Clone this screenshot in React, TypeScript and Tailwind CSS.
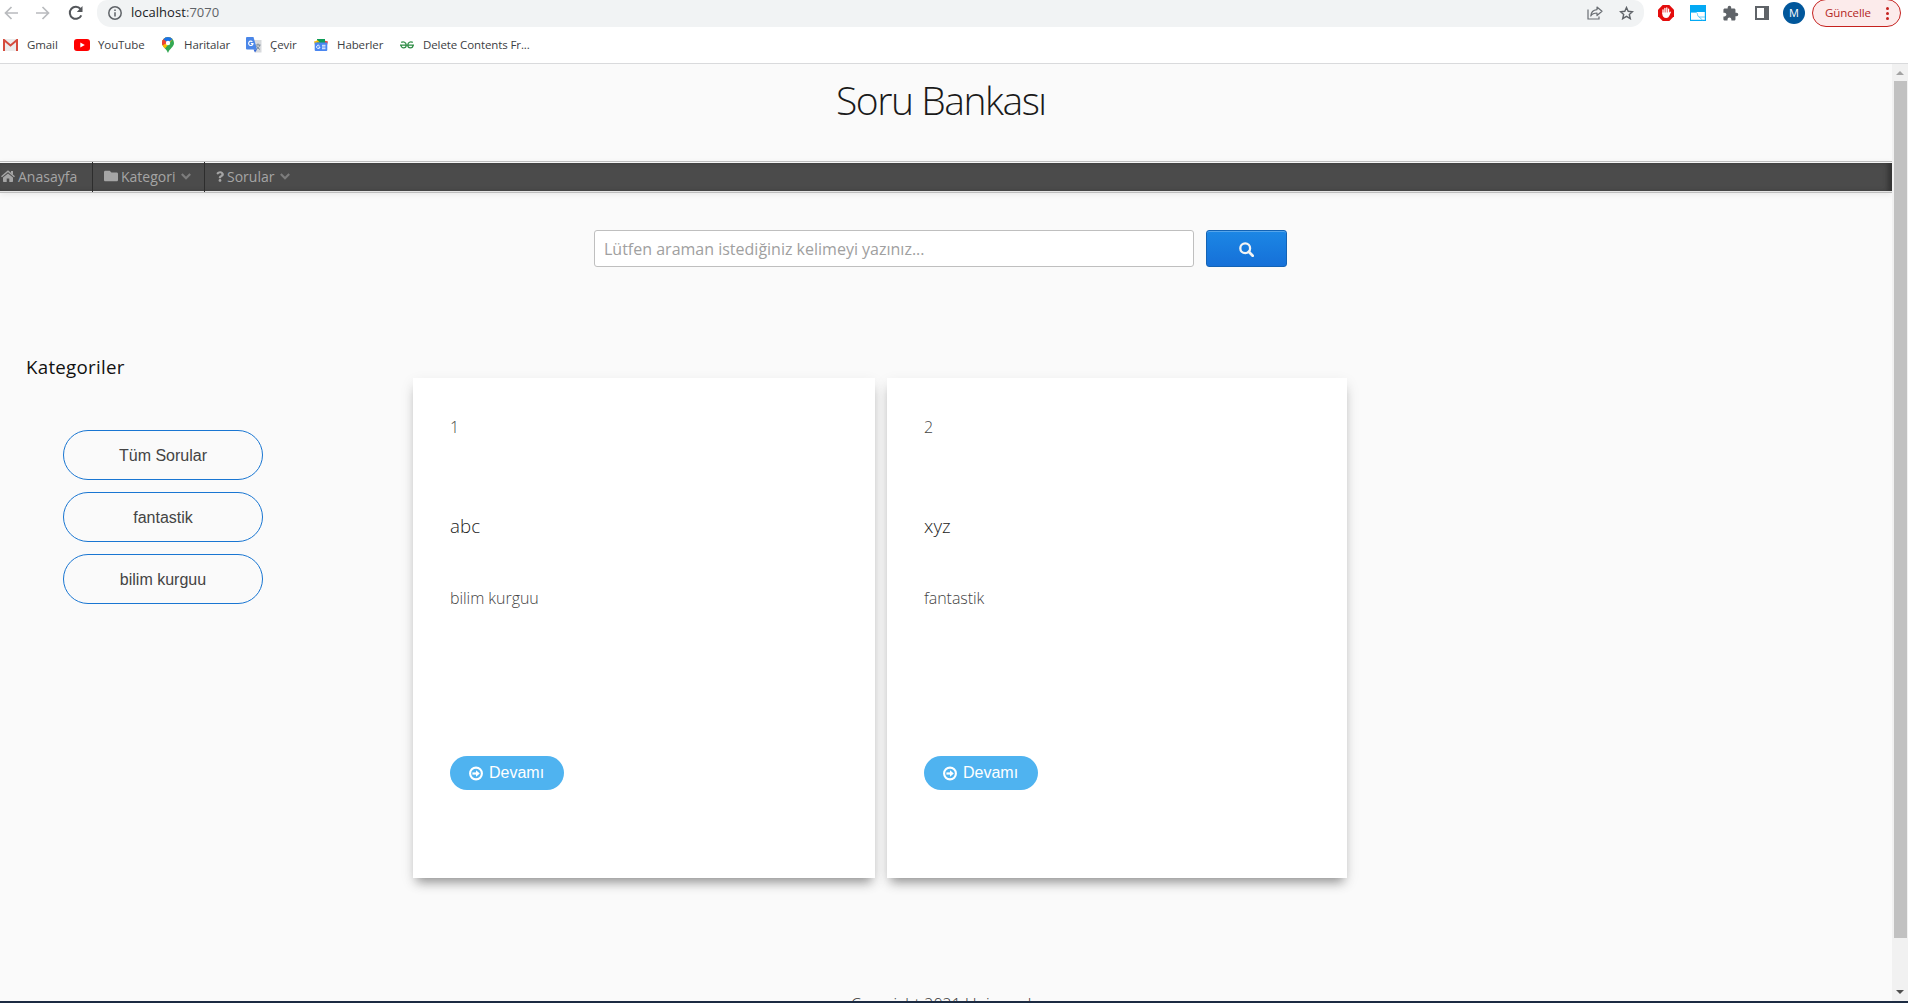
import React from "react";
import { FaFolder, FaQuestion } from "react-icons/fa";
import { MdExtension } from "react-icons/md";

const GmailIcon = () => (
  <svg width="15" height="12" viewBox="0 0 15 12">
    <path d="M0 0h15v12H0z" fill="#ececec" />
    <path d="M1 12V1l6.500 5.500L14 1v11" fill="none" stroke="#d54b3d" strokeWidth="2" />
  </svg>
);

const YoutubeIcon = () => (
  <svg width="16" height="12" viewBox="0 0 16 12">
    <rect width="16" height="12" rx="3" fill="#f00" />
    <path d="M6.300 3.400v5.200L10.800 6z" fill="#fff" />
  </svg>
);

const MapsIcon = () => (
  <svg width="12" height="16" viewBox="0 0 12 16">
    <path d="M6 0a6 6 0 0 0-6 6c0 4 4.500 5.500 6 10 1.500-4.500 6-6 6-10a6 6 0 0 0-6-6z" fill="#34a853" />
    <path d="M.4 8C1 9.500 2 10.400 3 11.500L10.500 2.200A6 6 0 0 0 6 0a6 6 0 0 0-6 6c0 .8.100 1.400.4 2z" fill="#fbbc04" />
    <path d="M1.300 2.200A6 6 0 0 0 .4 8L6 6z" fill="#ea4335" />
    <path d="M1.300 2.200 6 6l4.500-3.900A6 6 0 0 0 1.300 2.200z" fill="#1a73e8" />
    <path d="M1.300 2.200 4 4.600 1 8.500C0 7 0 4 1.300 2.200z" fill="#ea4335" />
    <circle cx="6" cy="6" r="2.200" fill="#fff" />
  </svg>
);

const TranslateIcon = () => (
  <svg width="16" height="16" viewBox="0 0 16 16">
    <path d="M6 3h9.500v12.500H9z" fill="#d8dadd" />
    <path d="M9.500 8h5M12 6.500V8m1.800 0c-.5 2-2 3.500-3.600 4.300M10.500 9c.8 1.600 2 2.600 3.500 3.500" stroke="#7b8a99" fill="none" />
    <path d="M0 1a1 1 0 0 1 1-1h6.500L11 12.500H1a1 1 0 0 1-1-1z" fill="#4a86e8" />
    <path d="M7.500 12.500H11L9 15.500z" fill="#3367d6" />
    <path d="M6.400 4.800A2.200 2.200 0 1 0 7 6.600H4.900" stroke="#fff" fill="none" strokeWidth="1.100" />
  </svg>
);

const NewsIcon = () => (
  <svg width="14" height="12" viewBox="0 0 14 12">
    <path d="M0 2.500l9-2 1 5.500H1z" fill="#fbbc04" />
    <path d="M14 2.500 8 1 7 6h6z" fill="#ea4335" />
    <path d="M3 0h8v5H3z" fill="#0f9d58" />
    <path d="M3 .8 6 3.500H2z" fill="#fbbc04" />
    <path d="M.7 3.500h12.600V11a1 1 0 0 1-1 1H1.700a1 1 0 0 1-1-1z" fill="#4a86f0" />
    <path d="M5.400 6.500A1.700 1.700 0 1 0 6 8H4.500M8 6.300h3.500M8 8h3.500M8 9.700h3.500" stroke="#fff" fill="none" strokeWidth=".9" />
  </svg>
);

const GeeksIcon = () => (
  <svg width="14" height="8" viewBox="0 0 14 8" fill="none" stroke="#2f8d46" strokeWidth="1.200">
    <path d="M1.200 1.400C3.500.2 6.200 1.300 6.200 4.200a2.600 2.600 0 0 1-5.200 0M12.800 1.400C10.500.2 7.800 1.300 7.800 4.200a2.600 2.600 0 0 0 5.200 0M0 4.200h14" />
  </svg>
);

const Arrow = ({ flip = false }: { flip?: boolean }) => (
  <svg width="14" height="14" viewBox="0 0 14 14" fill="none" stroke="#b9bbbe" strokeWidth="1.700" className={flip ? "rotate-180" : ""}>
    <path d="M14 7H1.500M7.500 1 1.500 7l6 6" />
  </svg>
);

const ReloadIcon = () => (
  <svg width="16" height="16" viewBox="0 0 16 16" fill="none" stroke="#54575b" strokeWidth="2">
    <path d="M13.300 10.300A6 6 0 1 1 12.500 4l1 1.200" />
    <path d="M14.500 1v6H8.800z" fill="#54575b" stroke="none" />
  </svg>
);

const InfoIcon = () => (
  <svg width="14" height="14" viewBox="0 0 14 14" fill="none" stroke="#5f6368" strokeWidth="1.500">
    <circle cx="7" cy="7" r="6.200" />
    <path d="M7 6.200v4.300M7 3.500V5" />
  </svg>
);

const ShareIcon = () => (
  <svg width="16" height="14" viewBox="0 0 16 14" fill="none" stroke="#6a6e73" strokeWidth="1.200">
    <path d="M1 3.500V13h11v-2.500" />
    <path d="M10 1l5 4.300-5 4.200V7C7 7 5 8 3.800 10 4 6.500 6.500 4 10 3.600z" strokeLinejoin="round" />
  </svg>
);

const StarIcon = () => (
  <svg width="15" height="14" viewBox="0 0 15 14" fill="none" stroke="#5f6368" strokeWidth="1.400">
    <path d="M7.500 1.500 9.200 5.300l4.300.4-3.200 2.800 1 4.200-3.800-2.300-3.800 2.300 1-4.200L1.500 5.700l4.300-.4z" />
  </svg>
);

const BlockerIcon = () => (
  <svg width="16" height="16" viewBox="0 0 16 16">
    <path d="M4.700 0h6.600L16 4.700v6.600L11.300 16H4.700L0 11.300V4.700z" fill="#e40d0d" />
    <path d="M5 8.500V4.800M6.900 8V3.300M8.800 8V3M10.600 8.500V4.200" stroke="#fff" strokeWidth="1.300" strokeLinecap="round" />
    <path d="M4.350 7.500h6.900l.8-1.100 1 .5-1.800 4A3.200 3.200 0 0 1 8.300 13C5.500 13 4.350 11 4.350 9z" fill="#fff" />
  </svg>
);

const BlueWindowIcon = () => (
  <svg width="16" height="16" viewBox="0 0 16 16">
    <path d="M0 0h16v16H0z" fill="#03a9f4" />
    <path d="M1 7h13.800v7.800H1z" fill="#fff" />
    <path d="M1 7.500h5.500c1.500.5.500 4 2.500 4.500h6M9 12l3.500 3" fill="none" stroke="#5cc6f7" strokeWidth=".9" />
  </svg>
);

const HomeIcon = () => (
  <svg width="14" height="12" viewBox="0 0 14 12" fill="currentColor">
    <path d="M.5 6.800 7 1.300l6.500 5.500" fill="none" stroke="currentColor" strokeWidth="1.500" />
    <path d="M10 1h2v4l-2-1.700zM7 3.400l5 4.200V11.200a.7.7 0 0 1-.7.7H8.300V8.600H5.700v3.300H2.700a.7.7 0 0 1-.7-.7V7.600z" />
  </svg>
);

const SearchIcon = () => (
  <svg width="15" height="15" viewBox="0 0 15 15" fill="none" stroke="#f4f4f4">
    <circle cx="6.200" cy="6.200" r="4.900" strokeWidth="2.300" />
    <path d="m9.800 9.800 3.900 3.900" strokeWidth="2.700" strokeLinecap="round" />
  </svg>
);

const bookmarks = [
  { label: "Gmail", icon: <GmailIcon />, pos: "w-[71px]", box: "w-6" },
  { label: "YouTube", icon: <YoutubeIcon />, pos: "w-[88px]", box: "w-6" },
  { label: "Haritalar", icon: <MapsIcon />, pos: "w-[84px]", box: "w-[22px]" },
  { label: "Çevir", icon: <TranslateIcon />, pos: "w-[68px]", box: "w-6" },
  { label: "Haberler", icon: <NewsIcon />, pos: "w-[86px]", box: "w-[23px]" },
  { label: "Delete Contents Fr...", icon: <GeeksIcon />, pos: "w-[150px]", box: "w-[23px]" },
];

function BrowserChrome() {
  return (
    <header className="h-16 shrink-0 border-b border-[#d9dadc] bg-white font-['Open_Sans',sans-serif]">
      <div className="flex h-[27px] items-center">
        <div className="flex h-[27px] w-[97px] shrink-0 items-center gap-[18px] pb-px pl-1">
          <Arrow />
          <Arrow flip />
          <ReloadIcon />
        </div>
        <div className="flex h-[27px] w-[1547px] shrink-0 items-center rounded-b-[14px] rounded-tl-[10px] rounded-tr-[10px] bg-[#f1f3f4] pb-px pl-[11px]">
          <InfoIcon />
          <span className="ml-[9px] text-[13px] tracking-[0.05px] text-[#202124]">
            localhost<span className="text-[#5f6368]">:7070</span>
          </span>
          <span className="mr-[10px] ml-auto flex items-center gap-4">
            <ShareIcon />
            <StarIcon />
          </span>
        </div>
        <div className="ml-[14px] flex items-center pb-px">
          <BlockerIcon />
          <span className="ml-4"><BlueWindowIcon /></span>
          <MdExtension className="ml-4 size-[17px] text-[#5f6368]" />
          <span className="ml-4 size-[14px] border-2 border-r-[5px] border-[#5f6368] bg-white" />
          <span className="ml-[14px] flex size-[22px] items-center justify-center rounded-full bg-[#01579b] text-[11px] text-white">M</span>
        </div>
        <div className="-mt-px ml-[7px] flex h-7 w-[89px] items-center rounded-full border border-[#c5221f] bg-[#fcebeb] pl-3 text-[11.500px] tracking-[-0.1px] text-[#b3261e]">
          Güncelle
          <span className="mr-[11px] ml-auto flex flex-col gap-[2px]">
            <i className="size-[3px] rounded-full bg-[#c5221f]" />
            <i className="size-[3px] rounded-full bg-[#c5221f]" />
            <i className="size-[3px] rounded-full bg-[#c5221f]" />
          </span>
        </div>
      </div>
      <nav className="flex h-9 items-center pl-[3px] text-[11.500px] tracking-[-0.1px] text-[#3c4043]">
        {bookmarks.map((b) => (
          <a key={b.label} className={`flex shrink-0 items-center whitespace-nowrap ${b.pos}`}>
            <span className={`shrink-0 ${b.box}`}>{b.icon}</span>
            {b.label}
          </a>
        ))}
      </nav>
    </header>
  );
}

const Chevron = () => (
  <svg width="10" height="7" viewBox="0 0 10 7" fill="none" stroke="#7d7d7d" strokeWidth="2.200">
    <path d="M.8 1 5 5.200 9.200 1" />
  </svg>
);

function MenuBar() {
  return (
    <nav className="mt-[97px] flex h-8 shrink-0 border-y border-[#bdbdbd] bg-[#4b4b4b] text-[14px] text-[#a5a5a5] shadow-[inset_0_1px_0_#f5f5f5,inset_0_-1px_0_#e4e4e4,inset_-4px_0_5px_#333,0_2px_6px_rgba(0,0,0,0.07)]">
      <a className="flex w-[93px] items-center border-r border-[#2d2d2d] pb-[2px] pl-px">
        <span className="mr-[3px]"><HomeIcon /></span>
        Anasayfa
      </a>
      <a className="flex w-28 items-center border-r border-[#2d2d2d] pb-[2px] pl-[11px]">
        <FaFolder className="mr-[3px] size-[14px]" />
        Kategori
        <span className="ml-[6px]"><Chevron /></span>
      </a>
      <a className="flex items-center pb-[2px] pl-[11px]">
        <FaQuestion className="mr-[3px] h-[11px] w-2" />
        Sorular
        <span className="ml-[6px]"><Chevron /></span>
      </a>
    </nav>
  );
}

const ArrowCircle = () => (
  <svg width="14" height="15" viewBox="0 0 14 15" fill="none" stroke="#fff" strokeWidth="2.100">
    <circle cx="7" cy="7.500" r="5.900" />
    <path d="M3.400 7.500h4.200" strokeWidth="2.200" />
    <path d="M7 4.200v6.600l3.800-3.300z" fill="#fff" stroke="none" />
  </svg>
);

function Card({ id, title, category, width }: { id: string; title: string; category: string; width: string }) {
  return (
    <article className={`flex h-[500px] flex-col items-start bg-white pl-[37px] font-light shadow-[0_8px_10px_-4px_rgba(0,0,0,0.36),0_5px_14px_rgba(0,0,0,0.09)] ${width}`}>
      <p className="mt-[37px] h-6 text-[16px] leading-6 tracking-[-0.05px] text-[#444]">{id}</p>
      <h3 className="mt-[73px] h-7 text-[18.720px] leading-7 tracking-[0.1px] text-[#222]">{title}</h3>
      <p className="mt-[46px] h-6 text-[16px] leading-6 tracking-[-0.05px] text-[#444]">{category}</p>
      <button className="mt-[146px] flex h-[34px] w-[114px] items-center rounded-full bg-[#4fb3f0] pl-[19px] font-['Liberation_Sans',sans-serif] text-[16px] font-normal text-white">
        <ArrowCircle />
        <span className="ml-[6px]">Devamı</span>
      </button>
    </article>
  );
}

function Scrollbar() {
  return (
    <div className="flex w-4 shrink-0 flex-col items-center bg-[#f1f1f1]">
      <span className="mt-[7px] size-0 border-x-4 border-b-4 border-x-transparent border-b-[#a3a3a3]" />
      <span className="mt-[6px] h-[857px] w-[13px] bg-[#c1c1c1]" />
      <span className="mt-auto mb-[7px] size-0 border-x-4 border-t-4 border-x-transparent border-t-[#505050]" />
    </div>
  );
}

export default function App() {
  return (
    <div className="flex h-[1003px] w-[1908px] flex-col overflow-hidden bg-[#fafafa] font-['Open_Sans',sans-serif]">
      <BrowserChrome />
      <div className="flex h-[937px] shrink-0 overflow-hidden">
        <main className="flex w-[1892px] shrink-0 flex-col">
          <div className="h-0 shrink-0">
            <h1 className="mt-[9px] ml-[836px] h-[54px] text-[39px] leading-[54px] font-light tracking-[-1.450px] whitespace-nowrap text-[#1a1a1a]">
              Soru Bankası
            </h1>
          </div>
          <MenuBar />
          <form className="mt-[37px] ml-[594px] flex shrink-0 gap-3">
            <input
              placeholder="Lütfen araman istediğiniz kelimeyi yazınız..."
              className="h-[37px] w-[600px] rounded-[3px] border border-[#bfbfbf] bg-white px-[9px] text-[16px] placeholder:text-[#a0a0a0]"
            />
            <button className="flex h-[37px] w-[81px] items-center justify-center rounded-[3px] border border-[#1363b5] bg-linear-to-b from-[#1c87e5] to-[#1670d8] pt-[2px] shadow-[inset_0_1px_0_rgba(255,255,255,0.25)]">
              <SearchIcon />
            </button>
          </form>
          <div className="mt-[85px] flex h-[620px] shrink-0">
            <aside className="w-[413px] shrink-0">
              <h2 className="-mt-px ml-[26px] h-8 text-[18.720px] leading-8 tracking-[0.27px] text-[#111]">Kategoriler</h2>
              <div className="mt-[47px] ml-[63px] flex flex-col gap-3">
                {["Tüm Sorular", "fantastik", "bilim kurguu"].map((c) => (
                  <button key={c} className="h-[50px] w-[200px] rounded-full border border-[#1976d2] pt-[2px] font-['Liberation_Sans',sans-serif] text-[16px] text-[#444]">
                    {c}
                  </button>
                ))}
              </div>
            </aside>
            <section className="mt-[26px] flex items-start gap-3">
              <Card id="1" title="abc" category="bilim kurguu" width="w-[462px]" />
              <Card id="2" title="xyz" category="fantastik" width="w-[460px]" />
            </section>
          </div>
          <footer className="mt-[20px] ml-[851px] shrink-0 text-[16px] leading-6 font-light whitespace-nowrap text-[#333]">Copyright 2021 Universal</footer>
        </main>
        <Scrollbar />
      </div>
      <div className="h-[2px] shrink-0 bg-[#1c2b42]" />
    </div>
  );
}
